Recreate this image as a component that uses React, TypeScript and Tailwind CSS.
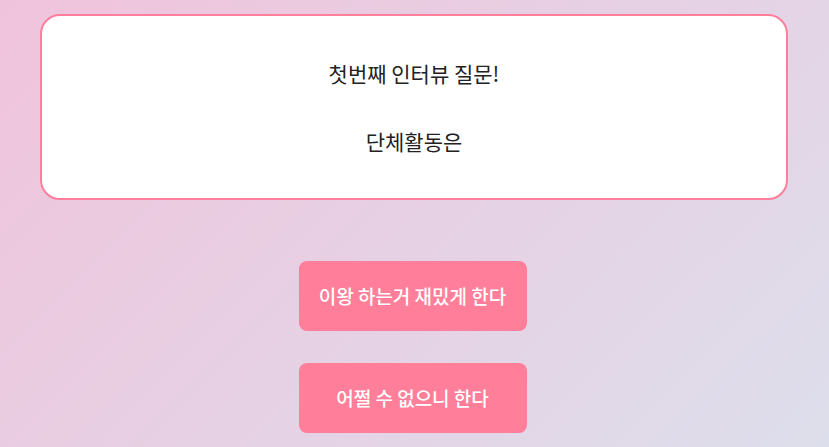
import React from "react";

export default function App() {
  return (
    <div
      className="min-h-[447px] w-full pl-10 pr-[41px] pt-[14px] bg-[linear-gradient(135deg,#f0c3dc_0%,#dddeeb_100%)]"
      style={{ fontFamily: '"Noto Sans CJK KR", "Noto Sans", sans-serif' }}
    >
      <div className="h-[186px] rounded-[20px] border-2 border-[#ff7e9c] bg-white flex flex-col items-center justify-center gap-[36px] text-[21px] leading-[32px] text-[#222]">
        <p>첫번째 인터뷰 질문!</p>
        <p>단체활동은</p>
      </div>
      <div className="mt-[61px] pr-[3px] flex flex-col items-center gap-8">
        <button className="w-[228px] h-[70px] rounded-lg bg-[#ff7f9a] text-white text-[19px] font-medium">
          이왕 하는거 재밌게 한다
        </button>
        <button className="w-[228px] h-[70px] rounded-lg bg-[#ff7f9a] text-white text-[19px] font-medium">
          어쩔 수 없으니 한다
        </button>
      </div>
    </div>
  );
}
